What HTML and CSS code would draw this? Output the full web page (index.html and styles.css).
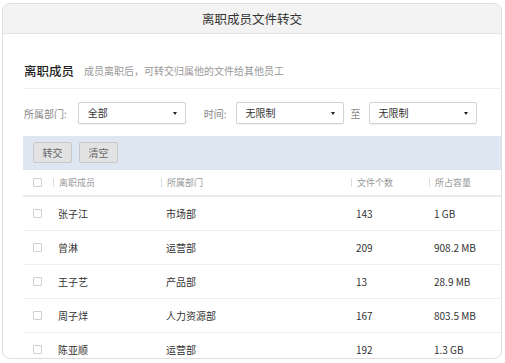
FILE: index.html
```html
<!DOCTYPE html>
<html lang="zh-CN">
<head>
  <meta charset="UTF-8">
  <title>离职成员文件转交</title>
  <link rel="stylesheet" href="styles.css">
</head>
<body>
  <div class="window">
    <div class="titlebar">离职成员文件转交</div>
    <div class="content">
      <div class="heading">
        <h2>离职成员</h2>
        <span class="hint">成员离职后，可转交归属他的文件给其他员工</span>
      </div>
      <div class="filters">
        <label class="dept-label">所属部门:</label>
        <div class="select"><span>全部</span><i class="arrow"></i></div>
        <label class="time-label">时间:</label>
        <div class="select"><span>无限制</span><i class="arrow"></i></div>
        <label class="to-label">至</label>
        <div class="select"><span>无限制</span><i class="arrow"></i></div>
      </div>
      <div class="toolbar">
        <button type="button">转交</button>
        <button type="button">清空</button>
      </div>
      <div class="table">
        <div class="row head">
          <div class="cell check"><span class="box"></span></div>
          <div class="cell">离职成员</div>
          <div class="cell">所属部门</div>
          <div class="cell">文件个数</div>
          <div class="cell">所占容量</div>
        </div>
        <div class="row">
          <div class="cell check"><span class="box"></span></div>
          <div class="cell">张子江</div>
          <div class="cell">市场部</div>
          <div class="cell">143</div>
          <div class="cell">1 GB</div>
        </div>
        <div class="row">
          <div class="cell check"><span class="box"></span></div>
          <div class="cell">曾淋</div>
          <div class="cell">运营部</div>
          <div class="cell">209</div>
          <div class="cell">908.2 MB</div>
        </div>
        <div class="row">
          <div class="cell check"><span class="box"></span></div>
          <div class="cell">王子艺</div>
          <div class="cell">产品部</div>
          <div class="cell">13</div>
          <div class="cell">28.9 MB</div>
        </div>
        <div class="row">
          <div class="cell check"><span class="box"></span></div>
          <div class="cell">周子烊</div>
          <div class="cell">人力资源部</div>
          <div class="cell">167</div>
          <div class="cell">803.5 MB</div>
        </div>
        <div class="row">
          <div class="cell check"><span class="box"></span></div>
          <div class="cell">陈亚顺</div>
          <div class="cell">运营部</div>
          <div class="cell">192</div>
          <div class="cell">1.3 GB</div>
        </div>
      </div>
    </div>
  </div>
</body>
</html>
```

FILE: styles.css
```css
body {
  margin: 0;
  padding: 3px 3px 0 2px;
  background: #fff;
  font-family: "Noto Sans CJK SC", "Noto Sans", sans-serif;
  color: #333;
}
.window {
  height: 354px;
  border: 1px solid #dedede;
  border-radius: 8px;
  overflow: hidden;
  background: #fff;
}
.titlebar {
  height: 29px;
  line-height: 29px;
  text-align: center;
  font-size: 12.5px;
  background: #f3f3f3;
  border-bottom: 1px solid #e3e3e3;
}
.content {
  padding-left: 20px;
}
.heading {
  display: flex;
  align-items: center;
  height: 20px;
  padding: 26px 0 8px;
  border-bottom: 1px solid #eee;
}
.heading h2 {
  margin: 0 10px 0 1px;
  font-size: 12.5px;
  font-weight: 500;
  color: #222;
}
.hint {
  font-size: 10px;
  color: #999;
}
.filters {
  display: flex;
  align-items: center;
  height: 22px;
  padding: 13px 0 12px;
  font-size: 10px;
}
.filters label {
  color: #888;
}
.filters .dept-label {
  margin: 0 11px 0 1px;
}
.filters .time-label {
  margin: 0 9px 0 18px;
}
.filters .to-label {
  margin: 0 8px 0 7px;
}
.select {
  position: relative;
  box-sizing: border-box;
  width: 108px;
  height: 22px;
  line-height: 20px;
  padding-left: 9px;
  border: 1px solid #d2d2d2;
  border-radius: 2px;
  box-shadow: 0 1px 1px rgba(0, 0, 0, 0.06);
  color: #333;
}
.arrow {
  position: absolute;
  right: 8px;
  top: 9px;
  border-left: 2.5px solid transparent;
  border-right: 2.5px solid transparent;
  border-top: 3px solid #222;
}
.toolbar {
  display: flex;
  gap: 7px;
  height: 34px;
  box-sizing: border-box;
  padding: 6px 0 0 10px;
  background: #dde6f1;
}
.toolbar button {
  width: 39px;
  height: 21px;
  padding: 0;
  font-family: inherit;
  font-size: 10px;
  color: #666;
  background: #e2e2e2;
  border: 1px solid #c8c8c8;
  border-radius: 2px;
}
.table {
  width: 560px;
}
.row {
  display: grid;
  grid-template-columns: 30px 108px 190px 78px 1fr;
  align-items: center;
  height: 33px;
  border-bottom: 1px solid #f0f0f0;
  font-size: 10px;
  color: #333;
}
.row.head {
  height: 25px;
  border-bottom: 2px solid #ececec;
  font-size: 9px;
  color: #999;
}
.cell {
  padding-left: 5px;
}
.row.head .cell {
  display: flex;
  align-items: center;
  padding-left: 0;
}
.row.head .cell::before {
  content: "";
  width: 1px;
  height: 9px;
  background: #ddd;
  margin-right: 5px;
}
.row.head .cell.check::before {
  display: none;
}
.cell.check {
  padding-left: 10px;
  display: flex;
}
.row.head .cell.check {
  padding-left: 10px;
}
.box {
  width: 7px;
  height: 7px;
  border: 1px solid #d0d0d0;
  border-radius: 1px;
}
```
